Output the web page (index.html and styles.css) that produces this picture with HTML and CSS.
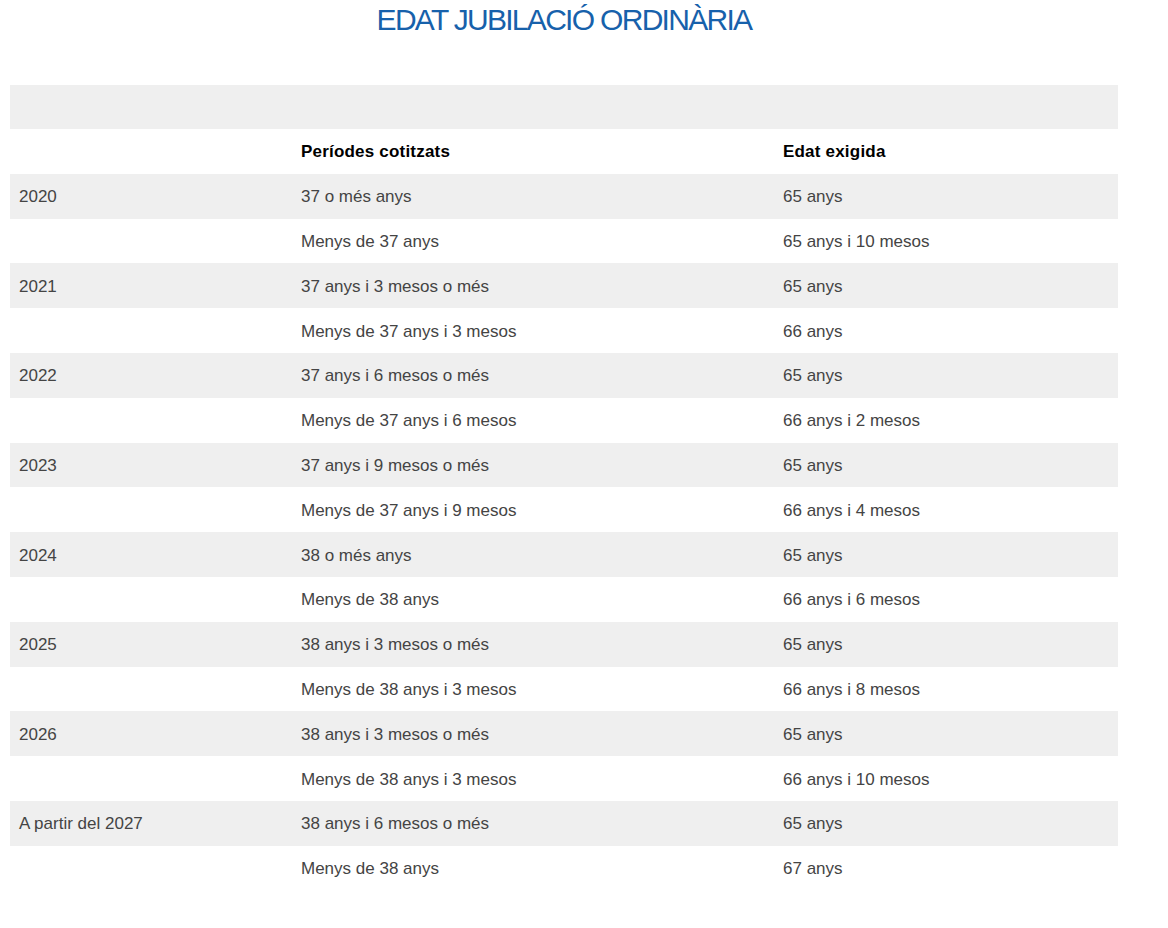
FILE: index.html
```html
<!DOCTYPE html>
<html lang="ca">
<head>
<meta charset="utf-8">
<title>Edat jubilació ordinària</title>
<link rel="stylesheet" href="styles.css">
</head>
<body>
<div class="page">
  <h1 class="title">EDAT JUBILACIÓ ORDINÀRIA</h1>
  <table class="table">
    <colgroup><col class="c1"><col class="c2"><col class="c3"></colgroup>
    <tr class="gray blank"><td></td><td></td><td></td></tr>
    <tr class="head"><td></td><td>Períodes cotitzats</td><td>Edat exigida</td></tr>
    <tr class="gray"><td>2020</td><td>37 o més anys</td><td>65 anys</td></tr>
    <tr><td></td><td>Menys de 37 anys</td><td>65 anys i 10 mesos</td></tr>
    <tr class="gray"><td>2021</td><td>37 anys i 3 mesos o més</td><td>65 anys</td></tr>
    <tr><td></td><td>Menys de 37 anys i 3 mesos</td><td>66 anys</td></tr>
    <tr class="gray"><td>2022</td><td>37 anys i 6 mesos o més</td><td>65 anys</td></tr>
    <tr><td></td><td>Menys de 37 anys i 6 mesos</td><td>66 anys i 2 mesos</td></tr>
    <tr class="gray"><td>2023</td><td>37 anys i 9 mesos o més</td><td>65 anys</td></tr>
    <tr><td></td><td>Menys de 37 anys i 9 mesos</td><td>66 anys i 4 mesos</td></tr>
    <tr class="gray"><td>2024</td><td>38 o més anys</td><td>65 anys</td></tr>
    <tr><td></td><td>Menys de 38 anys</td><td>66 anys i 6 mesos</td></tr>
    <tr class="gray"><td>2025</td><td>38 anys i 3 mesos o més</td><td>65 anys</td></tr>
    <tr><td></td><td>Menys de 38 anys i 3 mesos</td><td>66 anys i 8 mesos</td></tr>
    <tr class="gray"><td>2026</td><td>38 anys i 3 mesos o més</td><td>65 anys</td></tr>
    <tr><td></td><td>Menys de 38 anys i 3 mesos</td><td>66 anys i 10 mesos</td></tr>
    <tr class="gray"><td>A partir del 2027</td><td>38 anys i 6 mesos o més</td><td>65 anys</td></tr>
    <tr><td></td><td>Menys de 38 anys</td><td>67 anys</td></tr>
  </table>
</div>
</body>
</html>
```

FILE: styles.css
```css
html, body {
  margin: 0;
  padding: 0;
  background: #ffffff;
}
.page {
  width: 1108px;
  padding-left: 10px;
  font-family: "Liberation Sans", Arial, sans-serif;
}
.title {
  margin: 0;
  height: 85px;
  padding-top: 3px;
  box-sizing: border-box;
  text-align: center;
  font-size: 30px;
  line-height: 34px;
  font-weight: normal;
  letter-spacing: -1.7px;
  color: #1761ab;
}
.table {
  width: 1108px;
  border-collapse: collapse;
  table-layout: fixed;
}
.c1 { width: 282px; }
.c2 { width: 482px; }
.c3 { width: 344px; }
.table td {
  height: 44.8px;
  padding: 2px 9px 0;
  box-sizing: border-box;
  font-size: 17px;
  line-height: 20px;
  color: #444444;
  vertical-align: middle;
}
.table tr.gray td {
  background: #efefef;
}
.table tr.blank td {
  height: 44px;
}
.table tr.head td {
  font-weight: bold;
  color: #000000;
  letter-spacing: 0.2px;
  padding-top: 2px;
  padding-bottom: 0;
}
```
